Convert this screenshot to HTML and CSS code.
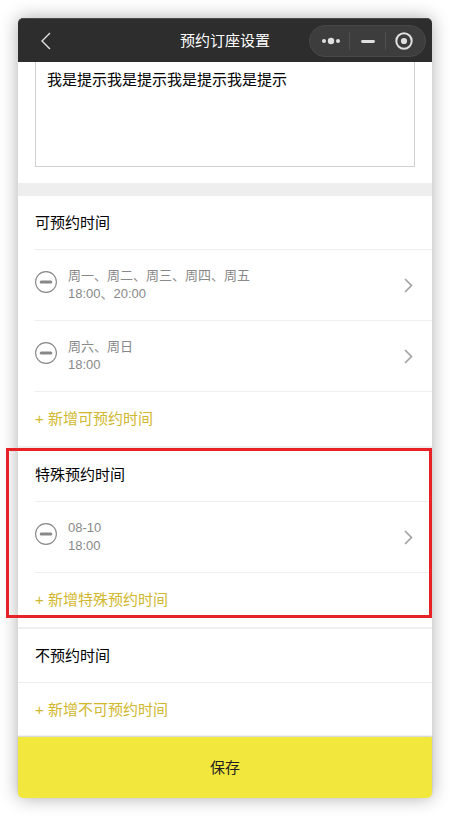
FILE: index.html
```html
<!DOCTYPE html>
<html lang="zh-CN">
<head>
<meta charset="utf-8">
<meta name="viewport" content="width=device-width, initial-scale=1">
<title>预约订座设置</title>
<link rel="stylesheet" href="styles.css">
</head>
<body>
<div class="phone">
  <header class="navbar">
    <button class="back" type="button" aria-label="返回">
      <svg width="12" height="18" viewBox="0 0 12 18"><path d="M11 1 3 9l8 8" fill="none" stroke="#e0e0e0" stroke-width="1.4"/></svg>
    </button>
    <h1 class="navbar-title">预约订座设置</h1>
    <div class="capsule">
      <button type="button" aria-label="更多">
        <svg width="20" height="20" viewBox="0 0 20 20" fill="#e0e0e0"><circle cx="3" cy="10" r="2"/><circle cx="10" cy="10" r="3.2"/><circle cx="17" cy="10" r="2"/></svg>
      </button>
      <button type="button" aria-label="最小化">
        <svg width="20" height="20" viewBox="0 0 20 20"><path d="M4.500 10.500h11" stroke="#e0e0e0" stroke-width="2.800" stroke-linecap="round"/></svg>
      </button>
      <button type="button" aria-label="关闭">
        <svg width="20" height="20" viewBox="0 0 20 20"><circle cx="10" cy="10" r="7.700" fill="none" stroke="#e0e0e0" stroke-width="2"/><circle cx="10" cy="10" r="3.100" fill="#e0e0e0"/></svg>
      </button>
    </div>
  </header>

  <main>
    <div class="note">
      <textarea class="note-input" aria-label="提示">我是提示我是提示我是提示我是提示</textarea>
    </div>

    <section class="group">
      <h2 class="group-title">可预约时间</h2>
      <ul class="slots">
        <li class="slot">
          <button class="remove" type="button" aria-label="删除"><svg width="22" height="22" viewBox="0 0 22 22"><circle cx="11" cy="11" r="10.400" fill="none" stroke="#888" stroke-width="1.100"/><path d="M6.200 11h9.600" stroke="#888" stroke-width="3" stroke-linecap="round"/></svg></button>
          <a class="slot-link" href="#"><span class="slot-text">周一、周二、周三、周四、周五<br>18:00、20:00</span><svg width="9" height="16" viewBox="0 0 9 16"><path d="M1 2l6.500 6.500L1 15" fill="none" stroke="#a0a0a0" stroke-width="1.600"/></svg></a>
        </li>
        <li class="slot">
          <button class="remove" type="button" aria-label="删除"><svg width="22" height="22" viewBox="0 0 22 22"><circle cx="11" cy="11" r="10.400" fill="none" stroke="#888" stroke-width="1.100"/><path d="M6.200 11h9.600" stroke="#888" stroke-width="3" stroke-linecap="round"/></svg></button>
          <a class="slot-link" href="#"><span class="slot-text">周六、周日<br>18:00</span><svg width="9" height="16" viewBox="0 0 9 16"><path d="M1 2l6.500 6.500L1 15" fill="none" stroke="#a0a0a0" stroke-width="1.600"/></svg></a>
        </li>
      </ul>
      <button class="add" type="button">+ 新增可预约时间</button>
    </section>

    <section class="group highlighted">
      <h2 class="group-title">特殊预约时间</h2>
      <ul class="slots">
        <li class="slot">
          <button class="remove" type="button" aria-label="删除"><svg width="22" height="22" viewBox="0 0 22 22"><circle cx="11" cy="11" r="10.400" fill="none" stroke="#888" stroke-width="1.100"/><path d="M6.200 11h9.600" stroke="#888" stroke-width="3" stroke-linecap="round"/></svg></button>
          <a class="slot-link" href="#"><span class="slot-text">08-10<br>18:00</span><svg width="9" height="16" viewBox="0 0 9 16"><path d="M1 2l6.500 6.500L1 15" fill="none" stroke="#a0a0a0" stroke-width="1.600"/></svg></a>
        </li>
      </ul>
      <button class="add" type="button">+ 新增特殊预约时间</button>
    </section>

    <section class="group empty">
      <h2 class="group-title">不预约时间</h2>
      <button class="add" type="button">+ 新增不可预约时间</button>
    </section>
  </main>

  <button class="save" type="button">保存</button>
</div>
</body>
</html>
```

FILE: styles.css
```css
* {
  box-sizing: border-box;
}

body {
  margin: 0;
  padding: 18px;
  background: #fff;
  color: #000;
  font: 400 15px/20px "Liberation Sans", "Noto Sans CJK SC", sans-serif;
}

button {
  padding: 0;
  border: 0;
  background: none;
  font: inherit;
  cursor: pointer;
}

svg {
  display: block;
}

.phone {
  border-radius: 5px;
  background: #fff;
  box-shadow: 0 0 18px rgba(0, 0, 0, 0.32);
}

.navbar {
  display: grid;
  grid-template-columns: 1fr auto 1fr;
  align-items: center;
  height: 44px;
  padding: 0 6px 0 21px;
  border-top: 1px solid #4a4a4a;
  border-radius: 5px 5px 0 0;
  background: #2d2d2d;
  color: #fff;
}

.back {
  justify-self: start;
}

.navbar-title {
  margin: 0 15px 0 0;
  font-size: 15px;
  font-weight: 400;
}

.capsule {
  display: flex;
  align-items: center;
  justify-self: end;
  width: 117px;
  height: 32px;
  padding: 0 3px;
  border: 1px solid #484848;
  border-radius: 16px;
  background: #3d3d3d;
}

.capsule button {
  display: flex;
  flex: 1;
  align-items: center;
  justify-content: center;
  height: 18px;
}

.capsule button + button {
  border-left: 1px solid #505050;
}

.note {
  padding: 0 17px 16px;
  border-bottom: 13px solid #eee;
}

.note-input {
  display: block;
  width: 100%;
  height: 105px;
  padding: 8px 11px;
  border: 1px solid #d0d0d0;
  border-top: 0;
  border-radius: 0;
  outline: 0;
  resize: none;
  background: #fff;
  color: #000;
  font: inherit;
}

.group {
  border-bottom: 2px solid #f0f0f0;
}

.group-title {
  margin: 0 0 0 17px;
  padding: 17px 0 16px;
  border-bottom: 1px solid #eee;
  font-size: 15px;
  font-weight: 400;
}

.slots {
  margin: 0 0 0 17px;
  padding: 0;
  list-style: none;
}

.slot {
  display: flex;
  align-items: flex-start;
  gap: 11px;
  padding: 17px 0;
  border-bottom: 1px solid #eee;
}

.remove {
  margin-top: 4px;
}

.slot-link {
  display: flex;
  flex: 1;
  align-items: center;
  justify-content: space-between;
  padding-right: 19px;
  color: #888;
  font-size: 13px;
  line-height: 18px;
  text-decoration: none;
}

.add {
  display: block;
  width: 100%;
  padding: 17px;
  color: #d1b72d;
  text-align: left;
}

.highlighted {
  position: relative;
}

.highlighted::after {
  content: "";
  position: absolute;
  inset: 0 0 9px -12px;
  border: 3px solid #e82127;
  pointer-events: none;
}

.empty {
  border-bottom: 0;
}

.empty .group-title {
  margin: 0;
  padding-left: 17px;
}

.save {
  display: block;
  width: 100%;
  padding: 21px 20px 20px;
  border-radius: 0 0 5px 5px;
  background: #f2e73d;
  box-shadow: 0 -1px 2px rgba(0, 0, 0, 0.2);
  color: #222;
}
```
